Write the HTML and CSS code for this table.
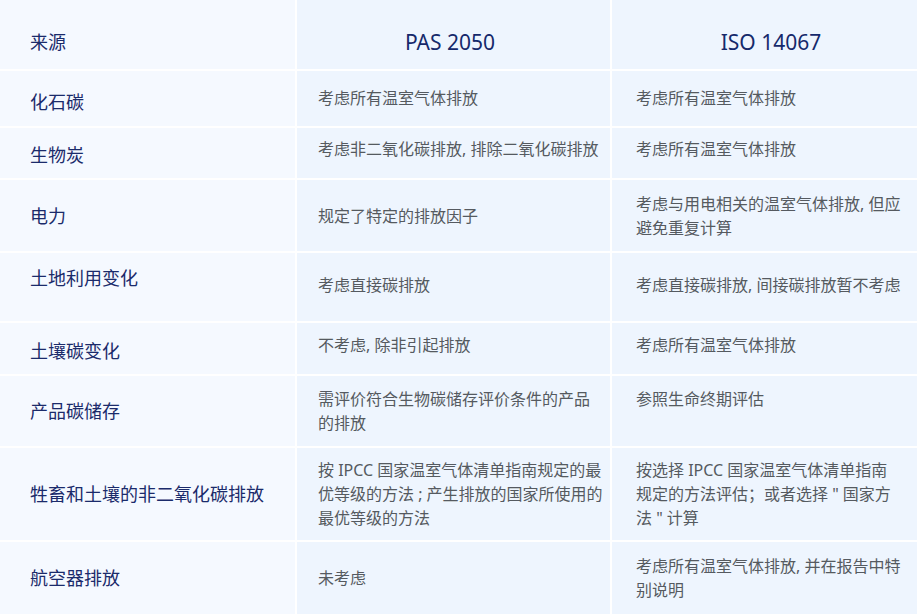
FILE: index.html
```html
<!DOCTYPE html>
<html lang="zh-CN">
<head>
<meta charset="utf-8">
<title>PAS 2050 与 ISO 14067 对比</title>
<link rel="stylesheet" href="styles.css">
</head>
<body>
<div class="compare">
  <div class="cell src head">来源</div>
  <div class="cell std head head-pas">PAS 2050</div>
  <div class="cell std head head-iso">ISO 14067</div>

  <div class="cell src r1">化石碳</div>
  <div class="cell txt c2 lift-xs">考虑所有温室气体排放</div>
  <div class="cell txt c3 lift-xs">考虑所有温室气体排放</div>

  <div class="cell src r2">生物炭</div>
  <div class="cell txt c2 lift">考虑非二氧化碳排放, 排除二氧化碳排放</div>
  <div class="cell txt c3 lift">考虑所有温室气体排放</div>

  <div class="cell src">电力</div>
  <div class="cell txt c2">规定了特定的排放因子</div>
  <div class="cell txt c3">考虑与用电相关的温室气体排放, 但应避免重复计算</div>

  <div class="cell src r4">土地利用变化</div>
  <div class="cell txt c2 lift-s">考虑直接碳排放</div>
  <div class="cell txt c3 lift-s">考虑直接碳排放, 间接碳排放暂不考虑</div>

  <div class="cell src r5">土壤碳变化</div>
  <div class="cell txt c2 lift">不考虑, 除非引起排放</div>
  <div class="cell txt c3 lift">考虑所有温室气体排放</div>

  <div class="cell src">产品碳储存</div>
  <div class="cell txt c2">需评价符合生物碳储存评价条件的产品的排放</div>
  <div class="cell txt c3 first-line">参照生命终期评估</div>

  <div class="cell src">牲畜和土壤的非二氧化碳排放</div>
  <div class="cell txt c2">按 IPCC 国家温室气体清单指南规定的最优等级的方法 ; 产生排放的国家所使用的最优等级的方法</div>
  <div class="cell txt c3">按选择 IPCC 国家温室气体清单指南规定的方法评估；或者选择 " 国家方法 " 计算</div>

  <div class="cell src">航空器排放</div>
  <div class="cell txt c2">未考虑</div>
  <div class="cell txt c3">考虑所有温室气体排放, 并在报告中特别说明</div>
</div>
</body>
</html>
```

FILE: styles.css
```css
html, body {
  margin: 0;
  padding: 0;
  background: #ffffff;
}

body {
  font-family: "Noto Sans", "Noto Sans CJK SC", sans-serif;
}

.compare {
  display: grid;
  grid-template-columns: 295px 313px 305px;
  grid-template-rows: 69px 55px 50px 71px 68px 51px 70px 92px 72px;
  gap: 2px;
  width: 917px;
  background: #ffffff;
}

.cell {
  display: flex;
  align-items: center;
  box-sizing: border-box;
}

.src {
  background: #f5f9ff;
  color: #1b2b6b;
  font-size: 18px;
  line-height: 24px;
  padding-left: 30px;
}

.txt,
.std {
  background: #eef5fe;
}

.txt {
  color: #555a60;
  font-size: 16px;
  line-height: 24px;
}

.c2 {
  padding: 0 6px 0 21px;
}

.c3 {
  padding: 0 15px 0 24px;
}

.lift-xs {
  padding-bottom: 2px;
}

.lift-s {
  padding-bottom: 4px;
}

.lift {
  padding-bottom: 8px;
}

.first-line {
  padding-bottom: 24px;
}

.head {
  padding-top: 14px;
}

.std {
  justify-content: center;
  color: #15296b;
  font-size: 21px;
}

.head-pas {
  padding-right: 7px;
}

.head-iso {
  padding-left: 13px;
}

.r1 {
  padding-top: 7px;
}

.r2 {
  padding-top: 4px;
}

.r4 {
  padding-bottom: 18px;
}

.r5 {
  padding-top: 4px;
}
```
